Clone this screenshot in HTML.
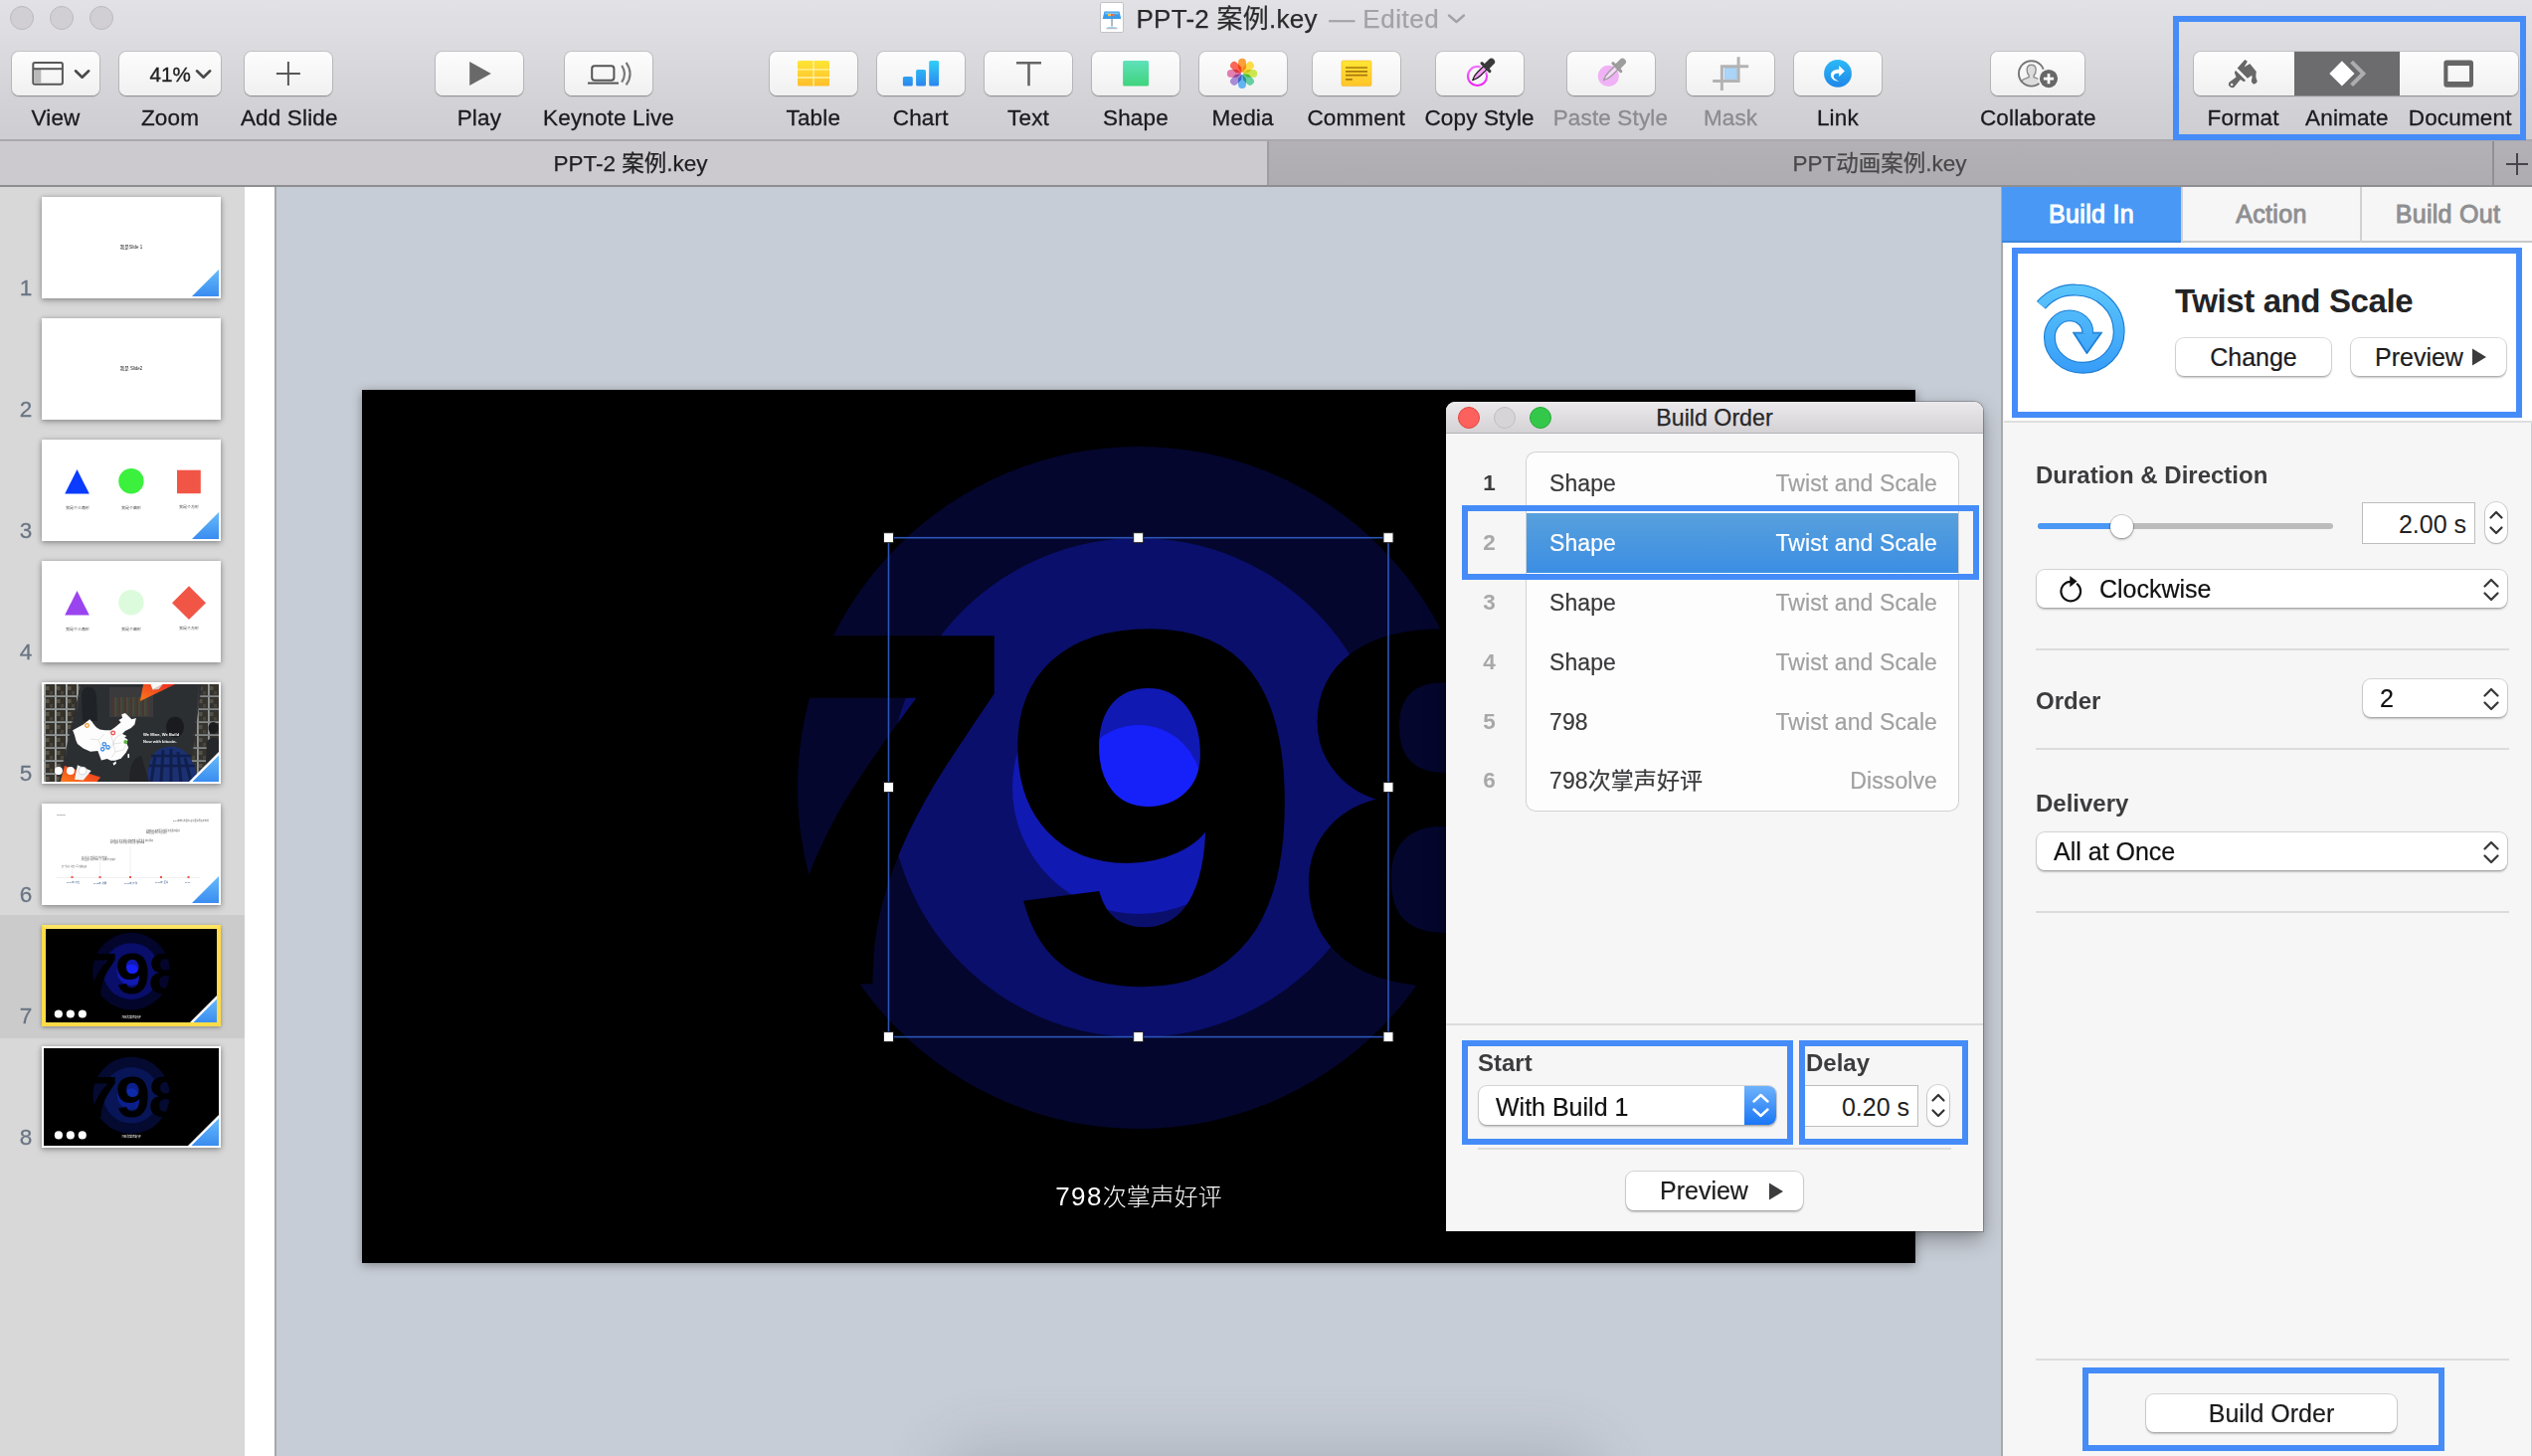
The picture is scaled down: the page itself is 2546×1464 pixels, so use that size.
<!DOCTYPE html>
<html lang="en">
<head>
<meta charset="utf-8">
<title>Keynote</title>
<style>
*{box-sizing:border-box;margin:0;padding:0}
html,body{width:2546px;height:1464px;overflow:hidden;background:#c7cdd6}
body{position:relative;font-family:"Liberation Sans","Noto Sans CJK SC",sans-serif;color:#1d1d1f;-webkit-font-smoothing:antialiased}
.abs{position:absolute}
/* ---------- toolbar ---------- */
#toolbar{position:absolute;left:0;top:0;width:2546px;height:142px;background:linear-gradient(#e2e1e5 0,#dcdbdf 44px,#d3d2d6 100px,#cecdd1 140px);border-bottom:2px solid #a9a8ad}
.tl{position:absolute;top:6px;width:24px;height:24px;border-radius:50%;background:#d1cfd3;border:1px solid #bcbabf}
.tb{position:absolute;top:52px;height:44px;width:89px;border-radius:7px;background:linear-gradient(#fdfdfd,#f0f0f0);box-shadow:0 0 0 1px rgba(0,0,0,.10),0 1px 1.5px rgba(0,0,0,.28)}
.tb svg{position:absolute;left:0;top:0;overflow:visible}
.lbl{position:absolute;top:105px;-webkit-text-stroke:.3px currentColor;height:28px;line-height:28px;font-size:22.5px;text-align:center;white-space:nowrap;color:#1b1b1f;transform:translateX(-50%);letter-spacing:.15px}
.lbl.dim{color:#8c8b90}
#title{position:absolute;left:1142.500px;top:.500px;height:36px;line-height:36px;font-size:26px;white-space:nowrap;color:#2a2a2c;letter-spacing:.25px;-webkit-text-stroke:.25px currentColor}
#title span{color:#a3a2a7}
.hl{z-index:6;position:absolute;border:6px solid #458cf8;pointer-events:none}
/* ---------- tab bar ---------- */
#tabbar{position:absolute;left:0;top:142px;width:2546px;height:46px;background:#cccacf;border-bottom:2px solid #8e8d92}
#tabbar .t2{position:absolute;left:1274px;top:0;width:1272px;height:44px;background:linear-gradient(#b3b1b6,#aeacb1);border-left:2px solid #9f9da2}
#tabbar .t3{position:absolute;left:2506px;top:0;width:2px;height:44px;background:#908f94}
.tabt{position:absolute;top:7.500px;-webkit-text-stroke:.25px currentColor;height:30px;line-height:30px;font-size:22.5px;white-space:nowrap;transform:translateX(-50%)}
/* ---------- sidebar ---------- */
#sidebar{position:absolute;left:0;top:188px;width:246px;height:1276px;background:#d8d8d8}
#gutter{position:absolute;left:246px;top:188px;width:32px;height:1276px;background:#fff;border-right:2px solid #a6a6a8}
.th{position:absolute;left:42px;width:180px;height:102px;background:#fff;box-shadow:0 1px 5px rgba(0,0,0,.33),0 3px 8px rgba(0,0,0,.12);overflow:hidden}
.th.dark{background:#000;border:2px solid #fff}
.num{position:absolute;left:6px;width:40px;text-align:center;font-size:22.500px;line-height:24px;color:#6a7584;-webkit-text-stroke:.3px currentColor;margin-top:-.500px}
.tri{position:absolute;right:2px;bottom:2px;width:27px;height:27px;background:linear-gradient(180deg,#66bbfa,#3a8cf0);clip-path:polygon(100% 0,100% 100%,0 100%)}
.tri.w{width:31px;height:31px;background:#fff;clip-path:polygon(100% 0,100% 100%,0 100%)}
.tri.w:after{content:"";position:absolute;right:0;bottom:0;width:calc(100% - 3.400px);height:calc(100% - 3.400px);background:linear-gradient(180deg,#66bbfa,#3a8cf0);clip-path:polygon(100% 0,100% 100%,0 100%)}
.dots{position:absolute;left:12px;bottom:8px;width:40px;height:8px}
.dots i{position:absolute;top:0;width:8px;height:8px;border-radius:50%;background:#fff}
.t6{position:absolute;font-size:12px;line-height:13px;color:#555;white-space:nowrap;transform:scale(.17);transform-origin:0 0}.t6.b{color:#3a5a8a;transform:scale(.2)}
/* ---------- canvas ---------- */
#canvas{position:absolute;left:278px;top:188px;width:1736px;height:1276px;background:#c7cdd6;overflow:hidden}
#slide{position:absolute;left:86px;top:204px;width:1562px;height:878px;background:#000;box-shadow:0 2px 10px rgba(0,0,0,.35);overflow:hidden}
/* ---------- inspector ---------- */
#insp{z-index:5;position:absolute;left:2012px;top:188px;width:533px;height:1276px;background:#f6f6f6;border-left:2px solid #a9a9ab}
.itab{position:absolute;top:0;height:56px;line-height:55px;font-size:25px;letter-spacing:.3px;font-weight:normal;-webkit-text-stroke:.95px currentColor;text-align:center;color:#8f8f92;background:#f6f6f6;border-bottom:2px solid #c8c8c8}
.sep{position:absolute;left:32px;width:476px;height:2px;background:#dcdcdc}
.h{position:absolute;font-size:24px;font-weight:bold;color:#3c3c3e;white-space:nowrap;line-height:30px;height:30px}
.btn{position:absolute;background:#fff;border-radius:8px;box-shadow:0 0 0 1px rgba(0,0,0,.13),0 1.5px 2px rgba(0,0,0,.22);font-size:25px;-webkit-text-stroke:.2px currentColor;color:#1c1c1e;white-space:nowrap;text-align:center}
.pop{position:absolute;background:#fff;border-radius:8px;box-shadow:0 0 0 1px rgba(0,0,0,.13),0 1.5px 2px rgba(0,0,0,.22);font-size:25px;-webkit-text-stroke:.2px currentColor;color:#111;white-space:nowrap}
.fld{position:absolute;background:#fff;border:1px solid #bdbdbd;font-size:25px;color:#222;text-align:right;white-space:nowrap}
.stp{position:absolute;background:#fff;border-radius:11px;box-shadow:0 0 0 1px rgba(0,0,0,.14),0 1px 2px rgba(0,0,0,.2)}
/* ---------- build order window ---------- */
#bo{position:absolute;left:1454px;top:404px;width:540px;height:834px;background:#f6f6f6;box-shadow:0 0 0 1px rgba(0,0,0,.22),0 9px 22px rgba(0,0,0,.30),0 2px 7px rgba(0,0,0,.16);border-radius:9px 9px 0 0;overflow:hidden;z-index:4}
#bo .bar{position:absolute;left:0;top:0;width:540px;height:32px;background:linear-gradient(#ebe9ec,#d4d2d5);border-bottom:1px solid #b4b2b5;text-align:center;font-size:23.200px;line-height:32px;color:#262628;-webkit-text-stroke:.25px currentColor}
.row{position:absolute;left:81px;width:434px;height:60px;font-size:23px;line-height:60px;color:#3a3a3c;letter-spacing:.1px;-webkit-text-stroke:.2px currentColor}
.row b{position:absolute;left:-78px;width:81px;text-align:center;font-size:22.500px;color:#a8a8a8;-webkit-text-stroke:0}
.row s{position:absolute;left:23px;text-decoration:none}
.row em{position:absolute;right:21px;font-style:normal;color:#a0a0a0}
</style>
</head>
<body>
<div id="toolbar">
<div class="tl" style="left:10px"></div><div class="tl" style="left:50px"></div><div class="tl" style="left:90px"></div>
<!-- title -->
<svg class="abs" style="left:1106px;top:2px" width="25" height="32" viewBox="0 0 25 32">
<rect x=".5" y=".5" width="23" height="30" rx="1.5" fill="#fff" stroke="#c4c2c6"/>
<path d="M4.5 9.5h15l1.8 7.5H2.7z" fill="#3a9be8"/><path d="M5.3 10.5h13.4l.4 1.8H4.9z" fill="#7cc4f6"/>
<rect x="8" y="12" width="3" height="2.2" fill="#f6c445"/><rect x="11.5" y="12" width="3" height="2.2" fill="#ef6a5a"/>
<rect x="11.3" y="17" width="1.5" height="7.5" fill="#9aa3ad"/><path d="M6.5 26.2c0-1.4 11-1.4 11 0z" fill="#7cc4f6"/><rect x="6.5" y="26" width="11" height="1.3" rx=".6" fill="#b6bcc4"/>
</svg>
<div id="title">PPT-2 案例.key <span style="margin-left:4px;letter-spacing:.5px">— Edited</span></div>
<svg class="abs" style="left:1455px;top:13px" width="20" height="12"><path d="M2 2.5l7.5 6.5 7.5-6.5" fill="none" stroke="#a3a2a7" stroke-width="2.4" stroke-linecap="round" stroke-linejoin="round"/></svg>

<!-- View -->
<div class="tb" style="left:12px;width:88px"><svg width="88" height="44">
<rect x="21.3" y="11" width="29.6" height="21.8" rx="1.8" fill="none" stroke="#575757" stroke-width="2"/>
<rect x="22.3" y="18" width="7" height="13.8" fill="#b9b9b9"/><path d="M21.3 17.2h29.6" stroke="#575757" stroke-width="2"/>
<path d="M64 19.3l6.6 6.4 6.6-6.4" fill="none" stroke="#484848" stroke-width="2.6" stroke-linecap="round" stroke-linejoin="round"/></svg></div>
<div class="lbl" style="left:56px">View</div>
<!-- Zoom -->
<div class="tb" style="left:120px;width:102px"><svg width="102" height="44">
<text x="30.500" y="29.700" font-size="20.600" fill="#222" stroke="#222" stroke-width=".35" font-family="Liberation Sans, sans-serif">41%</text>
<path d="M78 19.3l6.6 6.4 6.6-6.4" fill="none" stroke="#484848" stroke-width="2.6" stroke-linecap="round" stroke-linejoin="round"/></svg></div>
<div class="lbl" style="left:171px">Zoom</div>
<!-- Add Slide -->
<div class="tb" style="left:246px;width:88px"><svg width="88" height="44"><path d="M31.9 22.1h24M43.9 10.1v24" stroke="#575757" stroke-width="2"/></svg></div>
<div class="lbl" style="left:290.8px">Add Slide</div>
<!-- Play -->
<div class="tb" style="left:438px;width:88px"><svg width="88" height="44"><path d="M34.2 10v24l21.6-12z" fill="#696969"/></svg></div>
<div class="lbl" style="left:481.9px">Play</div>
<!-- Keynote Live -->
<div class="tb" style="left:568px;width:88px"><svg width="88" height="44">
<rect x="27.2" y="14.3" width="22.2" height="14.4" rx="2.6" fill="none" stroke="#555" stroke-width="2"/><path d="M23 31.6h31" stroke="#555" stroke-width="2"/>
<path d="M57.2 13.8q5.6 8.4 0 16.8" fill="none" stroke="#777" stroke-width="2.1"/><path d="M61.6 10.8q8 11.3 0 22.6" fill="none" stroke="#777" stroke-width="2.1"/></svg></div>
<div class="lbl" style="left:612px">Keynote Live</div>
<!-- Table -->
<div class="tb" style="left:774px;width:88px"><svg width="88" height="44">
<defs><linearGradient id="gy" x1="0" y1="0" x2="0" y2="1"><stop offset="0" stop-color="#ffe534"/><stop offset="1" stop-color="#ffbe2b"/></linearGradient></defs>
<rect x="28" y="9" width="32" height="25.6" rx="1.6" fill="url(#gy)"/>
<path d="M44 9v25.6M28 17.8h32M28 26h32" stroke="#fff3a8" stroke-width="1.3"/></svg></div>
<div class="lbl" style="left:817.8px">Table</div>
<!-- Chart -->
<div class="tb" style="left:882px;width:88px"><svg width="88" height="44">
<defs><linearGradient id="gb" gradientUnits="userSpaceOnUse" x1="0" y1="9" x2="0" y2="34.6"><stop offset="0" stop-color="#31cff7"/><stop offset="1" stop-color="#2a86ee"/></linearGradient></defs>
<rect x="25.9" y="25" width="9.9" height="9.6" rx="1.6" fill="url(#gb)"/><rect x="39.1" y="18.1" width="9.9" height="16.5" rx="1.6" fill="url(#gb)"/><rect x="52.2" y="9" width="9.9" height="25.6" rx="1.6" fill="url(#gb)"/></svg></div>
<div class="lbl" style="left:925.7px">Chart</div>
<!-- Text -->
<div class="tb" style="left:990px;width:88px"><svg width="88" height="44"><path d="M32 11.3h25M44.5 11.3v23" stroke="#666" stroke-width="2.6" fill="none"/></svg></div>
<div class="lbl" style="left:1034px">Text</div>
<!-- Shape -->
<div class="tb" style="left:1098px;width:88px"><svg width="88" height="44">
<defs><linearGradient id="gg" x1="0" y1="0" x2="0" y2="1"><stop offset="0" stop-color="#5fe1bb"/><stop offset="1" stop-color="#3fd37c"/></linearGradient></defs>
<rect x="31.1" y="9" width="26" height="25.6" rx="1.6" fill="url(#gg)"/></svg></div>
<div class="lbl" style="left:1141.9px">Shape</div>
<!-- Media -->
<div class="tb" style="left:1206px;width:88px"><svg width="88" height="44">
<g transform="translate(43 21.900)" style="isolation:isolate"><path d="M-.6 -1.200L-3.950 -5.200V-11.200A3.950 3.950 0 0 1 3.950 -11.200V-5.200L.6 -1.200Z" fill="#fb9f3a" transform="rotate(0)" style="mix-blend-mode:multiply"/><path d="M-.6 -1.200L-3.950 -5.200V-11.200A3.950 3.950 0 0 1 3.950 -11.200V-5.200L.6 -1.200Z" fill="#fddd45" transform="rotate(45)" style="mix-blend-mode:multiply"/><path d="M-.6 -1.200L-3.950 -5.200V-11.200A3.950 3.950 0 0 1 3.950 -11.200V-5.200L.6 -1.200Z" fill="#cde64f" transform="rotate(90)" style="mix-blend-mode:multiply"/><path d="M-.6 -1.200L-3.950 -5.200V-11.200A3.950 3.950 0 0 1 3.950 -11.200V-5.200L.6 -1.200Z" fill="#66cf9f" transform="rotate(135)" style="mix-blend-mode:multiply"/><path d="M-.6 -1.200L-3.950 -5.200V-11.200A3.950 3.950 0 0 1 3.950 -11.200V-5.200L.6 -1.200Z" fill="#62b3f2" transform="rotate(180)" style="mix-blend-mode:multiply"/><path d="M-.6 -1.200L-3.950 -5.200V-11.200A3.950 3.950 0 0 1 3.950 -11.200V-5.200L.6 -1.200Z" fill="#a88ad5" transform="rotate(225)" style="mix-blend-mode:multiply"/><path d="M-.6 -1.200L-3.950 -5.200V-11.200A3.950 3.950 0 0 1 3.950 -11.200V-5.200L.6 -1.200Z" fill="#e17fb0" transform="rotate(270)" style="mix-blend-mode:multiply"/><path d="M-.6 -1.200L-3.950 -5.200V-11.200A3.950 3.950 0 0 1 3.950 -11.200V-5.200L.6 -1.200Z" fill="#f96858" transform="rotate(315)" style="mix-blend-mode:multiply"/><circle r="1.100" fill="#fff"/></g></svg></div>
<div class="lbl" style="left:1249.6px">Media</div>
<!-- Comment -->
<div class="tb" style="left:1320px;width:88px"><svg width="88" height="44">
<defs><linearGradient id="gc" x1="0" y1="0" x2="0" y2="1"><stop offset="0" stop-color="#ffe633"/><stop offset="1" stop-color="#ffc42a"/></linearGradient></defs>
<rect x="29" y="9" width="30" height="25.6" rx="1.6" fill="url(#gc)" stroke="#f0b52a" stroke-width=".6"/>
<path d="M33 16h22M33 19.8h22M33 23.6h22M33 27.8h6.8" stroke="#a9780c" stroke-width="1.7"/></svg></div>
<div class="lbl" style="left:1363.7px">Comment</div>
<!-- Copy Style -->
<div class="tb" style="left:1444px;width:88px"><svg width="88" height="44">
<defs><linearGradient id="gm" x1="0" y1="0" x2="0" y2="1"><stop offset="0" stop-color="#f372fb"/><stop offset="1" stop-color="#ec1ff4"/></linearGradient></defs>
<circle cx="41.550" cy="24.400" r="9.550" fill="none" stroke="url(#gm)" stroke-width="2.100"/>
<g transform="translate(36.7 28.7) rotate(-44.500)"><g fill="none" stroke="#f8f8f8" stroke-width="2.600" stroke-linejoin="round"><path d="M0 0C2.500 -1.300 5.500 -2.300 9 -2.300L18.600 -2.300V2.300L9 2.300C5.500 2.300 2.500 1.300 0 0z"/><rect x="17.100" y="-7.100" width="3.100" height="14.200" rx="1.500"/><path d="M19 -3.500H26.500A3.500 3.500 0 0 1 26.500 3.500H19z"/></g><path d="M0 0C2.500 -1.300 5.500 -2.300 9 -2.300L18.600 -2.300V2.300L9 2.300C5.500 2.300 2.500 1.300 0 0z" fill="#f59cf8" stroke="#1c1c1c" stroke-width="1.200" stroke-linejoin="round"/><rect x="17.100" y="-7.100" width="3.100" height="14.200" rx="1.500" fill="#3a3a3a"/><path d="M19 -3.500H26.500A3.500 3.500 0 0 1 26.500 3.500H19z" fill="#3a3a3a"/></g></svg></div>
<div class="lbl" style="left:1487.6px">Copy Style</div>
<!-- Paste Style -->
<div class="tb" style="left:1576px;width:88px"><svg width="88" height="44">
<circle cx="41.400" cy="24.400" r="10.600" fill="#efb2f4"/>
<g transform="translate(36.55 28.7) rotate(-44.500)"><path d="M0 0C2.500 -1.300 5.500 -2.300 9 -2.300L18.600 -2.300V2.300L9 2.300C5.500 2.300 2.500 1.300 0 0z" fill="#f6d9f8" stroke="#9a9a9a" stroke-width="1.200" stroke-linejoin="round"/><rect x="17.100" y="-7.100" width="3.100" height="14.200" rx="1.500" fill="#9d9d9d"/><path d="M19 -3.500H26.500A3.500 3.500 0 0 1 26.500 3.500H19z" fill="#9d9d9d"/></g></svg></div>
<div class="lbl dim" style="left:1619.4px">Paste Style</div>
<!-- Mask -->
<div class="tb" style="left:1696px;width:88px"><svg width="88" height="44">
<rect x="38.2" y="16.6" width="12" height="10.6" fill="#abd5f8" stroke="#93c4ef" stroke-width=".8"/>
<path d="M35.4 13.2v25.8M52.1 5.3v25.6M34 14.7h28.2M26.2 29.4h27.4" stroke="#b3b3b3" stroke-width="3" fill="none"/></svg></div>
<div class="lbl dim" style="left:1740.1px">Mask</div>
<!-- Link -->
<div class="tb" style="left:1804px;width:88px"><svg width="88" height="44">
<defs><linearGradient id="gl" x1="0" y1="0" x2="0" y2="1"><stop offset="0" stop-color="#2cbaf6"/><stop offset="1" stop-color="#1f86e8"/></linearGradient></defs>
<circle cx="44" cy="21.900" r="13.900" fill="url(#gl)"/>
<path d="M45.200 14L50.900 19.500L45.200 25.100V21.400C42 21.400 39.700 22.500 39.700 24.600C39.700 27 42.500 28.600 45.400 29.700C40.500 29.500 36.900 27 36.900 23.400C36.900 19.800 40.600 17.700 45.200 17.700Z" fill="#fff"/></svg></div>
<div class="lbl" style="left:1847.9px">Link</div>
<!-- Collaborate -->
<div class="tb" style="left:2002px;width:94px"><svg width="94" height="44">
<defs><clipPath id="cpc"><circle cx="40.650" cy="21.900" r="12.400"/></clipPath></defs>
<g clip-path="url(#cpc)"><path d="M40.650 13.300c2.900 0 4.500 2.100 4.500 5 0 2.500-.900 4.500-2 5.500v1.900c2.200 1 7.800 2.300 8.600 5v6h-22.200v-6c.8-2.700 6.400-4 8.600-5v-1.900c-1.100-1-2-3-2-5.500 0-2.900 1.600-5 4.500-5z" fill="#dcdcdc" stroke="#8b8b8b" stroke-width="1.400"/></g>
<circle cx="40.650" cy="21.900" r="12.700" fill="none" stroke="#757575" stroke-width="1.900"/>
<circle cx="58" cy="27.050" r="10.700" fill="#f5f5f5"/><circle cx="58" cy="27.050" r="9.100" fill="#676767"/>
<path d="M52.900 27.050h10.200M58 21.950v10.200" stroke="#fff" stroke-width="2.700"/></svg></div>
<div class="lbl" style="left:2049.3px">Collaborate</div>
<!-- Format / Animate / Document -->
<div class="tb" style="left:2206px;width:326px;overflow:hidden"><svg width="326" height="44">
<rect x="101" y="-1" width="106" height="46" fill="#6c6c6e"/>
<g fill="#676767"><path d="M43.700 16.500L51.300 8.100L53.900 9.700L50.600 15.500L56.300 12.100L62.800 20C62.400 23 62 25 62.900 27.400A2.950 2.950 0 1 1 58 28.200C58.700 26.600 58.600 25 58.300 23.800L53.900 26.800Z"/>
<path d="M42.200 18.900L51.800 28.600C51.500 30 50.800 30.400 50.100 30.100L46.700 27.900L41.300 34.800A3.500 3.500 0 1 1 35.800 30.400L42.500 25.500L41 21.600C40.800 20.400 41.200 19.600 42.200 18.900Z"/></g>
<circle cx="38.100" cy="33" r="1.250" fill="#f6f6f6"/>
<path d="M136.300 21.900l12.600-12.600 12.600 12.600-12.600 12.600z" fill="#fff"/>
<path d="M158.600 10.200l11.700 11.700-11.700 11.700" fill="none" stroke="#adadad" stroke-width="4"/>
<path fill-rule="evenodd" fill="#656565" d="M254.300 8.500h23.700a3 3 0 0 1 3 3v21.200a3 3 0 0 1-3 3h-23.700a3 3 0 0 1-3-3v-21.200a3 3 0 0 1 3-3zM255.400 14.100v15.900h21.600v-15.900z"/></svg></div>
<div class="lbl" style="left:2255.600px">Format</div><div class="lbl" style="left:2359.900px">Animate</div><div class="lbl" style="left:2473.700px">Document</div>
</div>

<div id="tabbar"><div class="t2"></div><div class="t3"></div>
<div class="tabt" style="left:634px;color:#1f1f21">PPT-2 案例.key</div>
<div class="tabt" style="left:1890px;color:#48484a">PPT动画案例.key</div>
<svg class="abs" style="left:2518px;top:10px" width="26" height="26"><path d="M2 13h22M13 2v22" stroke="#45444a" stroke-width="2"/></svg>
</div>

<div id="sidebar">
<div class="abs" style="left:0;top:732px;width:246px;height:124px;background:#cbcbcb"></div>
<!-- 1 -->
<div class="num" style="top:90px">1</div>
<div class="th" style="top:10px"><div class="abs" style="left:0;top:45.400px;width:180px;text-align:center;font-size:12px;line-height:12px;color:#222;transform:scale(.37)">我是Slide 1</div><div class="tri"></div></div>
<!-- 2 -->
<div class="num" style="top:212px">2</div>
<div class="th" style="top:132px"><div class="abs" style="left:0;top:45.400px;width:180px;text-align:center;font-size:12px;line-height:12px;color:#222;transform:scale(.37)">我是 Slide2</div></div>
<!-- 3 -->
<div class="num" style="top:334px">3</div>
<div class="th" style="top:254px"><svg width="180" height="102"><path d="M35.500 30l12.300 24.600h-24.600z" fill="#0b3bff"/><circle cx="89.900" cy="41.800" r="12.700" fill="#3cf03e"/><rect x="136" y="30.700" width="23.800" height="23.500" fill="#f15546"/></svg>
<div class="abs" style="left:-24.500px;top:62.500px;width:120px;text-align:center;font-size:12px;line-height:12px;color:#444;transform:scale(.33)">我是个三角形</div>
<div class="abs" style="left:29.900px;top:62.500px;width:120px;text-align:center;font-size:12px;line-height:12px;color:#444;transform:scale(.33)">我是个圆形</div>
<div class="abs" style="left:87.900px;top:61.500px;width:120px;text-align:center;font-size:12px;line-height:12px;color:#444;transform:scale(.33)">我是个方形</div><div class="tri"></div></div>
<!-- 4 -->
<div class="num" style="top:456px">4</div>
<div class="th" style="top:376px"><svg width="180" height="102"><path d="M35.500 30l12.300 24.600h-24.600z" fill="#9a44f0"/><circle cx="89.900" cy="41.800" r="12.700" fill="#dcfbdc"/><path d="M148 25.300l17 16.900-17 16.900-17-16.900z" fill="#f15546"/></svg>
<div class="abs" style="left:-24.500px;top:62.500px;width:120px;text-align:center;font-size:12px;line-height:12px;color:#444;transform:scale(.33)">我是个三角形</div>
<div class="abs" style="left:29.900px;top:62.500px;width:120px;text-align:center;font-size:12px;line-height:12px;color:#444;transform:scale(.33)">我是个圆形</div>
<div class="abs" style="left:87.900px;top:61.500px;width:120px;text-align:center;font-size:12px;line-height:12px;color:#444;transform:scale(.33)">我是个方形</div></div>
<!-- 5 -->
<div class="num" style="top:578px">5</div>
<div class="th" style="top:498px;border:2px solid #fff;background:#34363a"><svg class="abs" style="left:0;top:0" width="176" height="98">
<defs><pattern id="sh" width="11" height="13" patternUnits="userSpaceOnUse"><rect width="11" height="13" fill="#35322c"/><rect x="2" y="2" width="3.500" height="4" fill="#5a5346"/><rect x="6" y="7" width="3" height="3.500" fill="#4b463c"/><rect x="0" y="0" width="1.800" height="13" fill="#a3a8a8"/><rect x="0" y="11.200" width="11" height="1.800" fill="#8e9393"/></pattern>
<linearGradient id="og" x1="0" y1="1" x2="1" y2="0"><stop offset="0" stop-color="#fb7a1a"/><stop offset="1" stop-color="#ec2a22"/></linearGradient></defs>
<rect width="176" height="98" fill="#3b3c3e"/>
<path d="M0 0h40L16 98H0z" fill="url(#sh)"/><path d="M156 0h20v98h-32z" fill="url(#sh)" opacity=".85"/>
<path d="M37.100 0h121.700L146 98H14.900z" fill="#2b2d31" opacity=".9"/>
<rect x="66" y="3" width="44" height="30" fill="#3a3a3d"/>
<g opacity=".5"><path d="M70 13v19M76 13v19M82 13v19M88 13v19M94 13v19M100 13v19M106 13v19" stroke="#6a2c28" stroke-width="1.600"/><path d="M72 13v19M78 13v19M84 13v19M90 13v19M96 13v19M102 13v19" stroke="#6a662c" stroke-width="1.300"/><path d="M74 13v19M80 13v19M86 13v19M92 13v19M98 13v19M104 13v19" stroke="#2f5a38" stroke-width="1.300"/></g>
<path d="M38 14c0-9 3-11 7-11s8 3 8 10l1 24h-15z" fill="#1f2226"/>
<path d="M104 98c1-24 6-33 20-35 16-2 26 8 32 35z" fill="#1b3172"/><path d="M108 98l4-26M118 98l2-32M128 98v-33M138 98l-3-30M148 98l-6-24" stroke="#101f4e" stroke-width="3"/><path d="M106 82h46M108 72h40" stroke="#101f4e" stroke-width="2.500"/>
<ellipse cx="132" cy="43" rx="9" ry="10.500" fill="#1a1b1e"/><path d="M86 98c0-16 4-24 12-26l8 26z" fill="#222326"/><ellipse cx="170.500" cy="44" rx="5" ry="6" fill="#1c1c1e"/><path d="M162 98l2-40c3-6 12-6 12 0v40z" fill="#26272a"/>
<path d="M100.100 0h32.100L96.900 17.100z" fill="url(#og)"/><path d="M107.400 0h12.400l-10.200 5.500z" fill="#f6f6f6"/><path d="M109.600 5.500l10.200-5.500-4.300 5z" fill="#cfcfcf"/>
<path d="M16.800 98l4-16.100 36.400 11.700-3.700 4.400z" fill="url(#og)"/><path d="M31 95.800l2.900-14.600 13.800 5.800-8 9.500z" fill="#f4f4f4"/>
<path d="M46.200 35.300L39.700 40.400L29.100 46.200L31.0 51.300L32.400 56.400L33.900 60.100L39.700 64.500L47.0 67.700L54.300 67.0L56.400 72.500L57.900 76.500L63.700 75.0L67.400 76.800L71.700 76.800L77.600 74.700L82.700 68.800L85.200 63.700L83.400 59.400L84.500 55.700L81.200 53.500L83.400 52.100L79.0 49.900L81.900 47.0L87.800 44.100L91.400 40.400L92.900 33.900L88.500 35.300L85.600 32.400L81.900 29.100L78.300 30.200L79.0 33.900L75.400 36.100L77.600 38.200L71.700 43.300L67.400 46.200L61.500 46.200L56.400 45.500L52.800 43.300L49.900 39.700L48.400 37.500z" fill="#fdfdfd"/>
<path d="M69.500 79.500l3-2 .5 2-2.500 2.200zM84.300 70.500l1.600-.8.200 4-1.500.500z" fill="#fdfdfd"/>
<path d="M47 55l8 1 6-6M55 56l3 8 8 2 4-6 8-1M66 46l3 10 1 4M70 60l2 8-4 6M78 50l-6 4-2 6M72 68l8-2 3-6" stroke="#c9c9c9" stroke-width=".5" fill="none"/>
<circle cx="43.500" cy="41.500" r="1.800" fill="none" stroke="#f39a2c" stroke-width="1.300"/><circle cx="69.700" cy="49" r="1.800" fill="none" stroke="#e9484a" stroke-width="1.300"/><circle cx="82.200" cy="58" r="1.900" fill="#55b53c"/>
<circle cx="60.800" cy="60.300" r="1.700" fill="none" stroke="#3e8de8" stroke-width="1.300"/><circle cx="64.500" cy="63.300" r="1.700" fill="none" stroke="#3e8de8" stroke-width="1.300"/><circle cx="59.200" cy="65.300" r="1.700" fill="none" stroke="#3e8de8" stroke-width="1.300"/>
<circle cx="14.900" cy="87" r="4" fill="#fff"/><circle cx="26.900" cy="87" r="4" fill="#fff"/><circle cx="39" cy="87" r="4" fill="#fff" stroke="#c4c4c4" stroke-width=".600"/>
</svg>
<div class="abs" style="left:99.500px;top:47.700px;width:130px;font-size:12px;line-height:18px;font-weight:bold;color:#fff;transform:scale(.34);transform-origin:0 0;white-space:nowrap">We Mine, We Build<br>Now with bitcoin.</div>
<div class="tri w" style="right:0;bottom:0;width:30px;height:30px"></div></div>
<!-- 6 -->
<div class="num" style="top:700px">6</div>
<div class="th" style="top:620px"><svg class="abs" style="left:0;top:0" width="180" height="102">
<path d="M15 74.500h144" stroke="#e6e6e6" stroke-width=".600"/><path d="M30.500 66v8M58.500 59v15M89 43v31" stroke="#dfe3e6" stroke-width=".500"/>
<rect x="29.500" y="73" width="2" height="2" fill="#f0524a"/><rect x="57.500" y="73" width="2" height="2" fill="#f0524a"/><rect x="88" y="73" width="2" height="2" fill="#f0524a"/><rect x="119" y="73" width="2" height="2" fill="#f0524a"/><rect x="146.500" y="73" width="2" height="2" fill="#f0524a"/></svg>
<div class="t6" style="left:15px;top:9.500px">Roadmap</div>
<div class="t6" style="left:132px;top:16px">2017年我们的目标 走向全球开拓新市场</div>
<div class="t6" style="left:105px;top:25.500px">第四阶段 完成全球布局 建立国际品牌<br>实现全面盈利 持续增长</div>
<div class="t6" style="left:69px;top:36px">第三阶段 扩大规模 增加产能 拓展渠道 完善服务<br>提升品牌 优化管理 加强研发 控制成本</div>
<div class="t6" style="left:40px;top:53px">第二阶段 产品迭代 优化体验<br>建立团队 完善流程 引入资本 扩大用户</div>
<div class="t6" style="left:20px;top:61.500px">第一阶段 创立公司 组建团队</div>
<div class="t6 b" style="left:24.500px;top:78px">2014年 创立</div><div class="t6 b" style="left:51.500px;top:78.500px">2015年 发展</div><div class="t6 b" style="left:82.500px;top:78.500px">2016年 扩张</div><div class="t6 b" style="left:114px;top:78px">2017年 全球</div><div class="t6 b" style="left:144px;top:78px">2018</div>
<div class="tri"></div></div>
<!-- 7 -->
<div class="num" style="top:822px">7</div>
<div class="th dark" style="top:742px;border:4px solid #ffdc47;border-top-color:#ffe562;box-shadow:0 1px 4px rgba(0,0,0,.35),inset 0 0 0 0 #000"><svg class="abs" style="left:0;top:0" width="172" height="94" viewBox="22.700 24 1516.600 829.800">
<circle cx="781" cy="400" r="343" fill="#03052b"/><circle cx="781" cy="400" r="251" fill="#090e6a"/><circle cx="781" cy="400" r="127" fill="#1119b3"/><circle cx="781" cy="400" r="63" fill="#1621fa"/>
<text transform="translate(0 595.300) scale(1.0915 1)" x="322.900 586.700 856" y="0" font-family="Liberation Sans, sans-serif" font-weight="bold" font-size="507" fill="#000">798</text>
<circle cx="135" cy="779" r="36" fill="#fff"/><circle cx="241" cy="779" r="36" fill="#fff"/><circle cx="347" cy="779" r="36" fill="#fff"/>
<text x="781" y="818" text-anchor="middle" font-family="Liberation Sans, Noto Sans CJK SC, sans-serif" font-size="26" fill="#fff">798次掌声好评</text></svg>
<div class="tri w" style="right:0;bottom:0;width:27px;height:27px"></div></div>
<!-- 8 -->
<div class="num" style="top:944px">8</div>
<div class="th dark" style="top:864px"><svg class="abs" style="left:0;top:0" width="176" height="98" viewBox="0 0 1562 870">
<circle cx="781" cy="420" r="343" fill="#040a30"/><circle cx="781" cy="420" r="251" fill="#081557"/><circle cx="781" cy="420" r="127" fill="#0b1f8c"/><circle cx="781" cy="420" r="63" fill="#0d2aa8"/>
<text transform="translate(0 615.300) scale(1.0915 1)" x="322.900 586.700 856" y="0" font-family="Liberation Sans, sans-serif" font-weight="bold" font-size="507" fill="#000">798</text>
<circle cx="132" cy="776" r="36" fill="#fff"/><circle cx="238" cy="776" r="36" fill="#fff"/><circle cx="344" cy="776" r="36" fill="#fff"/>
<text x="781" y="800" text-anchor="middle" font-family="Liberation Sans, Noto Sans CJK SC, sans-serif" font-size="26" fill="#fff">798次掌声好评</text></svg>
<div class="tri w" style="right:0;bottom:0"></div></div>
</div>
<div id="gutter"></div>

<div id="canvas">
<div class="abs" style="left:690px;top:1290px;width:620px;height:80px;border-radius:20px;box-shadow:0 0 60px 26px rgba(70,76,92,.19)"></div>
<div id="slide"><svg class="abs" style="left:0;top:0" width="1562" height="878" viewBox="0 0 1562 878">
<circle cx="781" cy="400" r="343" fill="#04062d"/><circle cx="781" cy="400" r="251" fill="#0a0f6b"/><circle cx="781" cy="400" r="127" fill="#1119b3"/><circle cx="781" cy="400" r="63" fill="#1621fa"/>
<text transform="translate(0 592.300) scale(1.082 1)" x="328.500 595 866.900" y="2 0 0" font-family="Liberation Sans, sans-serif" font-weight="bold" font-size="500" fill="#000" stroke="#000" stroke-width="6" stroke-linejoin="miter">798</text>
<g fill="none" stroke="#2c55b8" stroke-width="1.600"><rect x="529.500" y="148.700" width="502.500" height="501.900"/></g>
<g fill="#fff" stroke="#1a1a1a" stroke-width="1"><rect x="524.500" y="143.700" width="10" height="10"/><rect x="775.700" y="143.700" width="10" height="10"/><rect x="1027" y="143.700" width="10" height="10"/><rect x="524.500" y="394.600" width="10" height="10"/><rect x="1027" y="394.600" width="10" height="10"/><rect x="524.500" y="645.600" width="10" height="10"/><rect x="775.700" y="645.600" width="10" height="10"/><rect x="1027" y="645.600" width="10" height="10"/></g>
</svg>
<div class="abs" style="left:0;top:794.500px;width:1562px;text-align:center;font-size:24px;line-height:34px;color:#fff;font-weight:300;white-space:nowrap"><span style="letter-spacing:1.300px;font-size:26px;line-height:20px">798</span>次掌声好评</div>
</div>
</div>

<div id="insp"><div class="abs" style="left:1px;top:0;width:531px;height:1276px">
<!-- tabs: coordinates relative to #insp content box (abs x - 2015) -->
<div class="itab" style="left:-2px;width:180px;background:#4a98f5;color:#fff;border-bottom-color:#3d86dc">Build In</div>
<div class="itab" style="left:178px;width:180px;border-left:2px solid #d2d2d2">Action</div>
<div class="itab" style="left:358px;width:175px;border-left:2px solid #d2d2d2">Build Out</div>
<!-- effect header -->
<div class="abs" style="left:0;top:56px;width:532px;height:181px;background:#fff;border-bottom:2px solid #dedede"></div>
<svg class="abs" style="left:15px;top:82px" width="140" height="120" viewBox="2030 270 140 120">
<defs><linearGradient id="sp" gradientUnits="userSpaceOnUse" x1="0" y1="286" x2="0" y2="376"><stop offset="0" stop-color="#5cc6fb"/><stop offset="1" stop-color="#379cf8"/></linearGradient></defs>
<g fill="none" stroke-linejoin="round">
<path id="spp" d="M2052.400 306.900 A43.500 43.500 0 0 1 2087.700 291.600 A43 41.900 0 0 1 2130.700 333.500 A36.400 36.300 0 0 1 2094.300 369.800 A33.400 30.600 0 0 1 2060.900 339.200 A20.200 21.800 0 0 1 2081.100 317.400 A18.100 16.500 0 0 1 2099.200 334.300" stroke="#1c7fd6" stroke-width="11.900"/>
<path d="M2084.200 334.200H2113.900L2098.400 356z" fill="#1c7fd6" stroke="#1c7fd6" stroke-width=".8"/>
<path d="M2052.400 306.900 A43.500 43.500 0 0 1 2087.700 291.600 A43 41.900 0 0 1 2130.700 333.500 A36.400 36.300 0 0 1 2094.300 369.800 A33.400 30.600 0 0 1 2060.900 339.200 A20.200 21.800 0 0 1 2081.100 317.400 A18.100 16.500 0 0 1 2099.200 336" stroke="url(#sp)" stroke-width="9.600"/>
<path d="M2086.900 335.600H2111.200L2098.400 353.400z" fill="url(#sp)"/>
</g></svg>
<div class="abs" style="left:172px;top:94.500px;font-size:33px;line-height:40px;font-weight:bold;color:#232325;white-space:nowrap;letter-spacing:-.4px">Twist and Scale</div>
<div class="btn" style="left:173px;top:152px;width:156px;height:38px;line-height:38px">Change</div>
<div class="btn" style="left:349px;top:152px;width:156px;height:38px;line-height:38px;text-align:left;padding-left:24px">Preview<svg class="abs" style="left:121px;top:10px" width="16" height="18"><path d="M1 .5v17l14-8.500z" fill="#3c3c3e"/></svg></div>
<!-- duration & direction -->
<div class="h" style="left:32px;top:275px">Duration &amp; Direction</div>
<div class="abs" style="left:34px;top:338px;width:297px;height:6px;border-radius:3px;background:#bcbcbc"></div>
<div class="abs" style="left:34px;top:338px;width:84px;height:6px;border-radius:3px;background:#4a98f4"></div>
<div class="abs" style="left:107px;top:330px;width:23px;height:23px;border-radius:50%;background:#fff;box-shadow:0 0 0 1px rgba(0,0,0,.16),0 1.500px 2.500px rgba(0,0,0,.3)"></div>
<div class="fld" style="left:360px;top:317px;width:114px;height:42px;line-height:42px;padding-right:8px">2.00 s</div>
<div class="stp" style="left:484px;top:317px;width:22px;height:41px"><svg width="22" height="41"><path d="M5.500 15.500l5.500-5.500 5.500 5.500M5.500 25.500l5.500 5.500 5.500-5.500" fill="none" stroke="#333" stroke-width="2.200" stroke-linecap="round" stroke-linejoin="round"/></svg></div>
<div class="pop" style="left:33px;top:385px;width:473px;height:38px;line-height:38px;padding-left:63px">Clockwise
<svg class="abs" style="left:22px;top:5px" width="26" height="28"><path d="M12.300 6.800a9.800 9.800 0 1 0 6.500 2.500" fill="none" stroke="#111" stroke-width="2.200" stroke-linecap="round"/><path d="M11.300 1v11.200l7.200-5.600z" fill="#111"/></svg>
<svg class="abs" style="left:448px;top:7px" width="18" height="26"><path d="M2.500 9.500l6.500-6.500 6.500 6.500M2.500 16.500l6.500 6.500 6.500-6.500" fill="none" stroke="#3a3a3a" stroke-width="2.300" stroke-linecap="round" stroke-linejoin="round"/></svg></div>
<div class="sep" style="top:464px"></div>
<!-- order -->
<div class="h" style="left:32px;top:501.500px">Order</div>
<div class="pop" style="left:361px;top:495px;width:145px;height:38px;line-height:38px;padding-left:17px">2
<svg class="abs" style="left:120px;top:7px" width="18" height="26"><path d="M2.500 9.500l6.500-6.500 6.500 6.500M2.500 16.500l6.500 6.500 6.500-6.500" fill="none" stroke="#3a3a3a" stroke-width="2.300" stroke-linecap="round" stroke-linejoin="round"/></svg></div>
<div class="sep" style="top:564px"></div>
<!-- delivery -->
<div class="h" style="left:32px;top:604.500px">Delivery</div>
<div class="pop" style="left:33px;top:649px;width:473px;height:38px;line-height:38px;padding-left:17px">All at Once
<svg class="abs" style="left:448px;top:7px" width="18" height="26"><path d="M2.500 9.500l6.500-6.500 6.500 6.500M2.500 16.500l6.500 6.500 6.500-6.500" fill="none" stroke="#3a3a3a" stroke-width="2.300" stroke-linecap="round" stroke-linejoin="round"/></svg></div>
<div class="sep" style="top:728px"></div>
<div class="sep" style="top:1178px"></div>
<div class="btn" style="left:143px;top:1214px;width:252px;height:38px;line-height:38px">Build Order</div>
</div></div>

<div id="bo">
<div class="bar">Build Order</div>
<div class="abs" style="left:11.800px;top:4.900px;width:22.400px;height:22.400px;border-radius:50%;background:#fc615d;border:1px solid #e2463f"></div>
<div class="abs" style="left:47.700px;top:4.900px;width:22.400px;height:22.400px;border-radius:50%;background:#d6d4d7;border:1px solid #c1bfc2"></div>
<div class="abs" style="left:83.700px;top:4.900px;width:22.400px;height:22.400px;border-radius:50%;background:#34c84a;border:1px solid #25a93a"></div>
<!-- list box -->
<div class="abs" style="left:81px;top:51px;width:434px;height:360px;background:#fdfdfd;border-radius:9px;box-shadow:0 0 0 1px #d2d2d2"></div>
<div class="row" style="top:52px"><b style="color:#3d3d3f">1</b><s>Shape</s><em>Twist and Scale</em></div>
<div class="row" style="top:112px;background:linear-gradient(#58a0dc,#3b8ee4);color:#fff"><b>2</b><s>Shape</s><em style="color:#fff">Twist and Scale</em></div>
<div class="row" style="top:172px"><b>3</b><s>Shape</s><em>Twist and Scale</em></div>
<div class="row" style="top:232px"><b>4</b><s>Shape</s><em>Twist and Scale</em></div>
<div class="row" style="top:291.500px"><b>5</b><s>798</s><em>Twist and Scale</em></div>
<div class="row" style="top:351.300px"><b>6</b><s>798次掌声好评</s><em>Dissolve</em></div>
<!-- bottom -->
<div class="abs" style="left:0;top:625px;width:540px;height:2px;background:#dcdcdc"></div>
<div class="h" style="left:32px;top:650px;font-size:24px">Start</div>
<div class="pop" style="left:33px;top:688px;width:299px;height:39px;line-height:42px;padding-left:17px;font-size:25px;overflow:hidden">With Build 1
<div class="abs" style="left:267px;top:0;width:33px;height:39px;background:linear-gradient(#6eb2fb,#1a76f6)"><svg width="33" height="39"><path d="M9.500 15.500l7-6.500 7 6.500M9.500 23.500l7 6.500 7-6.500" fill="none" stroke="#fff" stroke-width="2.400" stroke-linecap="round" stroke-linejoin="round"/></svg></div></div>
<div class="h" style="left:362px;top:650px;font-size:24px">Delay</div>
<div class="fld" style="left:360px;top:687px;width:115px;height:42px;line-height:42px;padding-right:8px;font-size:25px">0.20 s</div>
<div class="stp" style="left:484px;top:687px;width:22px;height:41px"><svg width="22" height="41"><path d="M5.500 15.500l5.500-5.500 5.500 5.500M5.500 25.500l5.500 5.500 5.500-5.500" fill="none" stroke="#333" stroke-width="2.200" stroke-linecap="round" stroke-linejoin="round"/></svg></div>
<div class="abs" style="left:32px;top:750px;width:476px;height:2px;background:#dcdcdc"></div>
<div class="btn" style="left:181px;top:774px;width:178px;height:39px;line-height:39px;text-align:left;padding-left:34px;font-size:25px">Preview<svg class="abs" style="left:143px;top:11px" width="16" height="18"><path d="M1 .5v17l14-8.500z" fill="#3c3c3e"/></svg></div>
</div>

<div class="hl" style="left:2185px;top:16px;width:355px;height:125px"></div>
<div class="hl" style="left:2023px;top:249px;width:513px;height:171px"></div>
<div class="hl" style="left:2094px;top:1375px;width:364px;height:84px"></div>
<div class="hl" style="left:1470px;top:508px;width:520px;height:75px"></div>
<div class="hl" style="left:1470px;top:1046px;width:333px;height:105px"></div>
<div class="hl" style="left:1809px;top:1046px;width:170px;height:105px"></div>

</body>
</html>
